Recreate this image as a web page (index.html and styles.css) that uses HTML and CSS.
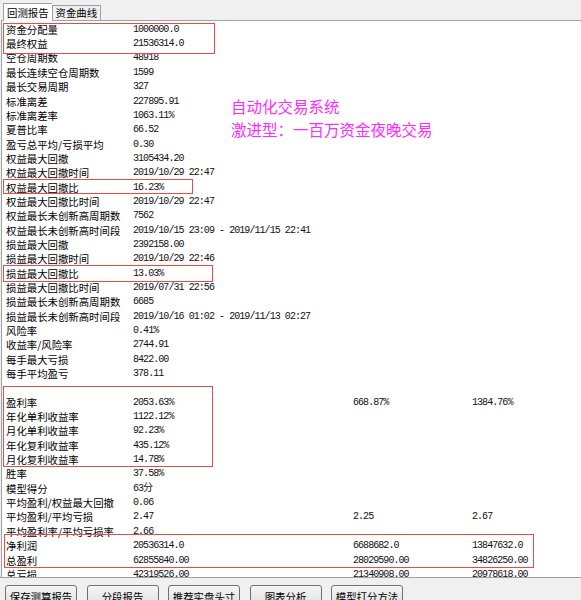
FILE: index.html
```html
<!DOCTYPE html>
<html lang="zh-CN">
<head>
    <meta charset="UTF-8">
    <title>回测报告</title>
    <link rel="stylesheet" href="styles.css">
</head>
<body>
<div class="app">
    <div class="tabs">
        <span class="tab active">回测报告</span>
        <span class="tab">资金曲线</span>
    </div>

    <div class="panel">
        <div class="report">
            <div class="row"><span class="name">资金分配量</span><span class="val">1000000.0</span></div>
            <div class="row"><span class="name">最终权益</span><span class="val">21536314.0</span></div>
            <div class="row"><span class="name">空仓周期数</span><span class="val">48918</span></div>
            <div class="row"><span class="name">最长连续空仓周期数</span><span class="val">1599</span></div>
            <div class="row"><span class="name">最长交易周期</span><span class="val">327</span></div>
            <div class="row"><span class="name">标准离差</span><span class="val">227895.91</span></div>
            <div class="row"><span class="name">标准离差率</span><span class="val">1063.11%</span></div>
            <div class="row"><span class="name">夏普比率</span><span class="val">66.52</span></div>
            <div class="row"><span class="name">盈亏总平均/亏损平均</span><span class="val">0.30</span></div>
            <div class="row"><span class="name">权益最大回撤</span><span class="val">3105434.20</span></div>
            <div class="row"><span class="name">权益最大回撤时间</span><span class="val">2019/10/29 22:47</span></div>
            <div class="row"><span class="name">权益最大回撤比</span><span class="val">16.23%</span></div>
            <div class="row"><span class="name">权益最大回撤比时间</span><span class="val">2019/10/29 22:47</span></div>
            <div class="row"><span class="name">权益最长未创新高周期数</span><span class="val">7562</span></div>
            <div class="row"><span class="name">权益最长未创新高时间段</span><span class="val">2019/10/15 23:09 - 2019/11/15 22:41</span></div>
            <div class="row"><span class="name">损益最大回撤</span><span class="val">2392158.00</span></div>
            <div class="row"><span class="name">损益最大回撤时间</span><span class="val">2019/10/29 22:46</span></div>
            <div class="row"><span class="name">损益最大回撤比</span><span class="val">13.03%</span></div>
            <div class="row"><span class="name">损益最大回撤比时间</span><span class="val">2019/07/31 22:56</span></div>
            <div class="row"><span class="name">损益最长未创新高周期数</span><span class="val">6685</span></div>
            <div class="row"><span class="name">损益最长未创新高时间段</span><span class="val">2019/10/16 01:02 - 2019/11/13 02:27</span></div>
            <div class="row"><span class="name">风险率</span><span class="val">0.41%</span></div>
            <div class="row"><span class="name">收益率/风险率</span><span class="val">2744.91</span></div>
            <div class="row"><span class="name">每手最大亏损</span><span class="val">8422.00</span></div>
            <div class="row"><span class="name">每手平均盈亏</span><span class="val">378.11</span></div>
            <div class="row"></div>
            <div class="row"><span class="name">盈利率</span><span class="val">2053.63%</span><span class="val">668.87%</span><span class="val">1384.76%</span></div>
            <div class="row"><span class="name">年化单利收益率</span><span class="val">1122.12%</span></div>
            <div class="row"><span class="name">月化单利收益率</span><span class="val">92.23%</span></div>
            <div class="row"><span class="name">年化复利收益率</span><span class="val">435.12%</span></div>
            <div class="row"><span class="name">月化复利收益率</span><span class="val">14.78%</span></div>
            <div class="row"><span class="name">胜率</span><span class="val">37.58%</span></div>
            <div class="row"><span class="name">模型得分</span><span class="val">63分</span></div>
            <div class="row"><span class="name">平均盈利/权益最大回撤</span><span class="val">0.06</span></div>
            <div class="row"><span class="name">平均盈利/平均亏损</span><span class="val">2.47</span><span class="val">2.25</span><span class="val">2.67</span></div>
            <div class="row"><span class="name">平均盈利率/平均亏损率</span><span class="val">2.66</span></div>
            <div class="row"><span class="name">净利润</span><span class="val">20536314.0</span><span class="val">6688682.0</span><span class="val">13847632.0</span></div>
            <div class="row"><span class="name">总盈利</span><span class="val">62855840.00</span><span class="val">28029590.00</span><span class="val">34826250.00</span></div>
            <div class="row"><span class="name">总亏损</span><span class="val">42319526.00</span><span class="val">21340908.00</span><span class="val">20978618.00</span></div>
        </div>
    </div>

    <div class="buttons">
        <button class="btn">保存测算报告</button>
        <button class="btn">分段报告</button>
        <button class="btn">推荐实盘头寸</button>
        <button class="btn">图表分析</button>
        <button class="btn">模型打分方法</button>
    </div>

    <!-- 标注框 -->
    <div class="mark mark-capital"></div>
    <div class="mark mark-eq-dd"></div>
    <div class="mark mark-pl-dd"></div>
    <div class="mark mark-rate"></div>
    <div class="mark mark-profit"></div>

    <div class="note">
        <div>自动化交易系统</div>
        <div>激进型：一百万资金夜晚交易</div>
    </div>
</div>
</body>
</html>
```

FILE: styles.css
```css
html, body {
    margin: 0;
    padding: 0;
}

.app {
    position: relative;
    width: 581px;
    height: 600px;
    overflow: hidden;
    background: #f0f0f0;
    font-family: "Noto Sans CJK SC", sans-serif;
    color: #000000;
}

.tabs {
    display: flex;
    align-items: flex-end;
    height: 20px;
    padding-left: 3px;
}

.tab {
    height: 14px;
    line-height: 14px;
    padding: 0 3px;
    font-size: 10.4px;
    border: 1px solid #a0a0a0;
    border-bottom: none;
    background: #f0f0f0;
}

.tab.active {
    position: relative;
    z-index: 1;
    height: 17px;
    line-height: 17px;
    margin-bottom: -1px;
    background: #ffffff;
    border-right: none;
}

.panel {
    height: 556px;
    margin-left: 1px;
    background: #ffffff;
    border-top: 1px solid #a0a0a0;
    border-left: 1px solid #a0a0a0;
    overflow: hidden;
}

.report {
    padding: 1.8px 0 0 4px;
}

.row {
    display: grid;
    grid-template-columns: 127px 220px 119px 1fr;
    height: 14.35px;
    line-height: 14.35px;
    white-space: nowrap;
}

.name {
    font-size: 10.4px;
}

.val {
    font-family: "Liberation Mono", "Noto Sans CJK SC", monospace;
    font-size: 10px;
    letter-spacing: -0.94px;
    color: #111111;
}

.buttons {
    display: flex;
    gap: 9.5px;
    height: 23px;
    padding: 7px 0 0 5px;
    border-top: 1px solid #a0a0a0;
}

.btn {
    width: 72px;
    height: 22px;
    padding: 0;
    font-family: "Noto Sans CJK SC", sans-serif;
    font-size: 10.4px;
    color: #000000;
    background: linear-gradient(#f6f6f6, #dedede);
    border: 1px solid #707070;
    border-radius: 3px;
}

/* 红色标注框 */
.mark {
    position: absolute;
    border: 1px solid #e94b4b;
}

.mark-capital {
    left: 3px;
    top: 23px;
    width: 210px;
    height: 29px;
}

.mark-eq-dd {
    left: 3px;
    top: 179px;
    width: 188px;
    height: 13px;
}

.mark-pl-dd {
    left: 3px;
    top: 265px;
    width: 208px;
    height: 15px;
}

.mark-rate {
    left: 3px;
    top: 386px;
    width: 208px;
    height: 79px;
}

.mark-profit {
    left: 4px;
    top: 534px;
    width: 528px;
    height: 32px;
}

.note {
    position: absolute;
    left: 231px;
    top: 95px;
    font-size: 15.5px;
    line-height: 22.5px;
    color: #ff2bff;
}
```
